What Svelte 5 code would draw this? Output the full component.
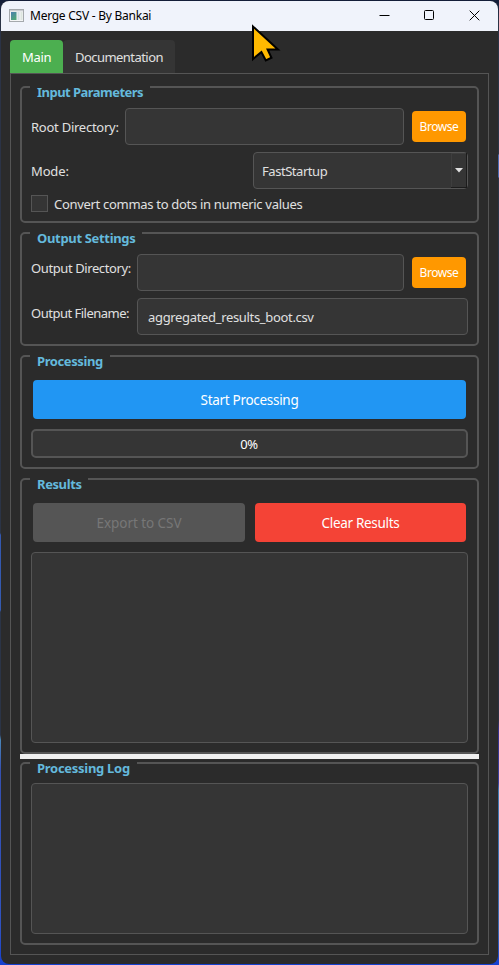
<script>
  const groups = { mode: 'FastStartup', filename: 'aggregated_results_boot.csv', progress: 0 };
</script>

{#snippet title(text, width, spacing)}
  <h2 style="width: {width}px; letter-spacing: {spacing}px"><span>{text}</span></h2>
{/snippet}

<div class="desktop">
  <div class="window">
    <header>
      <svg class="app" width="15" height="13" viewBox="0 0 15 13">
        <defs>
          <linearGradient id="pane" x1="0" y1="0" x2="0.6" y2="1">
            <stop offset="0" stop-color="#4a7fb0" />
            <stop offset="1" stop-color="#4fa578" />
          </linearGradient>
        </defs>
        <rect x="0.5" y="0.5" width="14" height="12" fill="#f4f5f6" stroke="#a5a9ad" />
        <rect x="1" y="1" width="13" height="1.3" fill="#c9ccd0" />
        <rect x="2" y="3" width="5.5" height="8" fill="url(#pane)" />
        <rect x="8.5" y="3" width="2" height="8" fill="#d3e0e4" />
        <rect x="11.5" y="3" width="2" height="8" fill="#dde6df" />
      </svg>
      <span class="name">Merge CSV - By Bankai</span>
      <div class="controls">
        <svg width="11" height="11" viewBox="0 0 11 11"><path d="M0.5 5.5H10.5" /></svg>
        <svg width="11" height="11" viewBox="0 0 11 11"><rect x="0.5" y="0.5" width="9" height="9" rx="1" /></svg>
        <svg width="11" height="11" viewBox="0 0 11 11"><path d="M0.7 0.7L10.3 10.3M10.3 0.7L0.7 10.3" /></svg>
      </div>
    </header>

    <main>
      <nav>
        <div class="tab active"><span>Main</span></div>
        <div class="tab docs"><span>Documentation</span></div>
      </nav>
      <div class="pane">
        <section class="input">
          {@render title('Input Parameters', 120, -0.53)}
          <div class="row">
            <label class="w94" for="root">Root Directory:</label>
            <div class="field" id="root"></div>
            <button class="browse">Browse</button>
          </div>
          <div class="row mode">
            <span class="caption">Mode:</span>
            <div class="field combo">
              <span>{groups.mode}</span>
              <i><svg width="8" height="5" viewBox="0 0 8 5"><path d="M0 0H8L4 4.5Z" fill="#e0e0e0" /></svg></i>
            </div>
          </div>
          <div class="row check">
            <div class="box"></div>
            <span>Convert commas to dots in numeric values</span>
          </div>
        </section>

        <section class="output">
          {@render title('Output Settings', 112, -0.33)}
          <div class="row">
            <label class="w106 directory" for="out">Output Directory:</label>
            <div class="field" id="out"></div>
            <button class="browse">Browse</button>
          </div>
          <div class="row">
            <label class="w106 filename" for="file">Output Filename:</label>
            <div class="field text" id="file"><span>{groups.filename}</span></div>
          </div>
        </section>

        <section class="processing">
          {@render title('Processing', 80, -0.4)}
          <button class="start">Start Processing</button>
          <div class="progress">{groups.progress}%</div>
        </section>

        <section class="results">
          {@render title('Results', 58, -0.4)}
          <div class="actions">
            <button class="export" disabled>Export to CSV</button>
            <button class="clear">Clear Results</button>
          </div>
          <div class="area"></div>
        </section>

        <div class="splitter"></div>

        <section class="log">
          {@render title('Processing Log', 107, -0.28)}
          <div class="area"></div>
        </section>
      </div>
    </main>
  </div>

  <svg class="cursor" width="30" height="42" viewBox="0 0 30 42">
    <path d="M2 2.5V35L10.4 28L14.8 36.5L20.5 33.7L16.6 25.5H27Z" fill="#ffb900" stroke="#000" stroke-width="2" />
  </svg>
</div>

<style>
  .desktop {
    position: relative;
    box-sizing: border-box;
    width: 499px;
    height: 965px;
    padding: 1px;
    background:
      linear-gradient(#131d38 0, #2b3346 20px, #2b3446 154px, #4a68b0 155px, #4a68b0 177px, #2b3446 178px, #2b3040 720px, #35308a 730px, #3a409a 783px, #3f78b0 790px, #3a68b0 930px, #1540d0 965px) right / 1px 100% no-repeat,
      linear-gradient(#131d38 0, #2b3346 20px, #2b3446 533px, #3358b0 535px, #355bb0 610px, #2b3446 612px, #2b3446 735px, #4a86b8 740px, #3550b0 770px, #2f52c0 930px, #1540d0 965px);
    font-family: 'Noto Sans', 'Open Sans', sans-serif;
    font-size: 13px;
    letter-spacing: -0.3px;
    line-height: 18px;
    color: #e0e0e0;
    overflow: hidden;
    white-space: nowrap;
  }
  .window {
    display: flex;
    flex-direction: column;
    height: 963px;
    border-radius: 8px;
    overflow: hidden;
    background: #2b2b2b;
  }
  header {
    display: flex;
    align-items: center;
    height: 30px;
    flex: none;
    padding-left: 8px;
    background: #f0f3fb;
    color: #000;
    font-size: 12px;
  }
  .app { margin-top: -2px; }
  .name { margin-left: 6px; letter-spacing: -0.25px; }
  .controls { display: flex; gap: 34px; margin: -2px 18px 0 auto; }
  .controls path, .controls rect { fill: none; stroke: #000; stroke-width: 1; }
  main {
    display: flex;
    flex-direction: column;
    flex: 1;
    padding: 9px;
  }
  nav { display: flex; height: 33px; }
  .tab {
    box-sizing: border-box;
    width: 112px;
    padding: 8px 0 0 12px;
    border-radius: 4px 4px 0 0;
    background: #353535;
  }
  .tab.active { width: 53px; background: #4caf50; color: #fff; }
  .docs { letter-spacing: -0.55px; }
  .pane {
    box-sizing: border-box;
    width: 479px;
    height: 882px;
    border: 1px solid #555;
    padding: 12px 9px 9px;
    display: flex;
    flex-direction: column;
  }
  section {
    position: relative;
    box-sizing: border-box;
    flex: none;
    display: flex;
    flex-direction: column;
    border: 2px solid #555;
    border-radius: 5px;
    padding: 20px 9px 9px;
  }
  h2 {
    position: absolute;
    left: 8px;
    top: -5px;
    box-sizing: border-box;
    margin: 0;
    padding-left: 7px;
    height: 18px;
    background: #2b2b2b;
    color: #64b9dc;
    font-size: 13px;
    font-weight: 700;
  }
  .input { height: 137px; }
  .output { height: 114px; margin-top: 9px; gap: 7px; }
  .processing { height: 114px; margin-top: 9px; padding-top: 23px; }
  .results { height: 276px; margin-top: 9px; padding-top: 23px; }
  .log { height: 183px; margin-top: 3px; padding-top: 19px; }
  .splitter { height: 5px; flex: none; background: #f0f0f0; }
  .row { display: flex; align-items: center; height: 37px; }
  label { flex: none; box-sizing: border-box; }
  .w94 { width: 94px; letter-spacing: -0.25px; }
  .w106 { width: 106px; padding-bottom: 8px; }
  .directory { padding-bottom: 9px; letter-spacing: -0.4px; }
  .filename { letter-spacing: -0.5px; }
  .field {
    box-sizing: border-box;
    height: 37px;
    flex: 1;
    display: flex;
    align-items: center;
    border: 1px solid #555;
    border-radius: 4px;
    background: #353535;
  }
  .text { padding: 0 0 0 10px; letter-spacing: -0.33px; }
  .mode { margin-top: 7px; justify-content: space-between; }
  .caption { letter-spacing: -0.15px; }
  .combo { flex: none; width: 215px; padding-left: 8px; letter-spacing: -0.45px; }
  .combo i {
    box-sizing: border-box;
    display: flex;
    align-items: center;
    justify-content: center;
    width: 16px;
    height: 35px;
    margin-left: auto;
    border: solid #1c1c1c;
    border-width: 0 1px 1px 0;
    box-shadow: inset 1px 1px #3e3e3e;
  }
  .check { height: 17px; margin-top: 6px; }
  .box {
    box-sizing: border-box;
    width: 17px;
    height: 17px;
    margin-right: 6px;
    border: 1px solid #555;
    background: #353535;
  }
  button {
    flex: none;
    border: 0;
    padding: 1px 0 0;
    border-radius: 4px;
    color: #fff;
    font: 13.5px/18px 'Noto Sans', 'Open Sans', sans-serif;
    letter-spacing: -0.3px;
  }
  .browse { width: 54px; height: 31px; margin: 0 2px 0 8px; background: #ff9800; font-size: 12px; letter-spacing: -0.45px; }
  .start { height: 39px; margin: 0 2px; background: #2196f3; }
  .progress {
    box-sizing: border-box;
    height: 29px;
    margin-top: 10px;
    padding-right: 1px;
    border: 2px solid #555;
    border-radius: 5px;
    background: #353535;
    color: #fff;
    display: flex;
    align-items: center;
    justify-content: center;
  }
  .actions { display: flex; gap: 10px; margin: 0 2px 10px; }
  .actions button { height: 39px; }
  .actions .export { width: 212px; background: #555; color: #777; letter-spacing: -0.05px; }
  .actions .clear { width: 211px; background: #f44336; }
  .area {
    flex: 1;
    border: 1px solid #555;
    border-radius: 4px;
    background: #353535;
  }
  .cursor { position: absolute; left: 251px; top: 24px; }
</style>
